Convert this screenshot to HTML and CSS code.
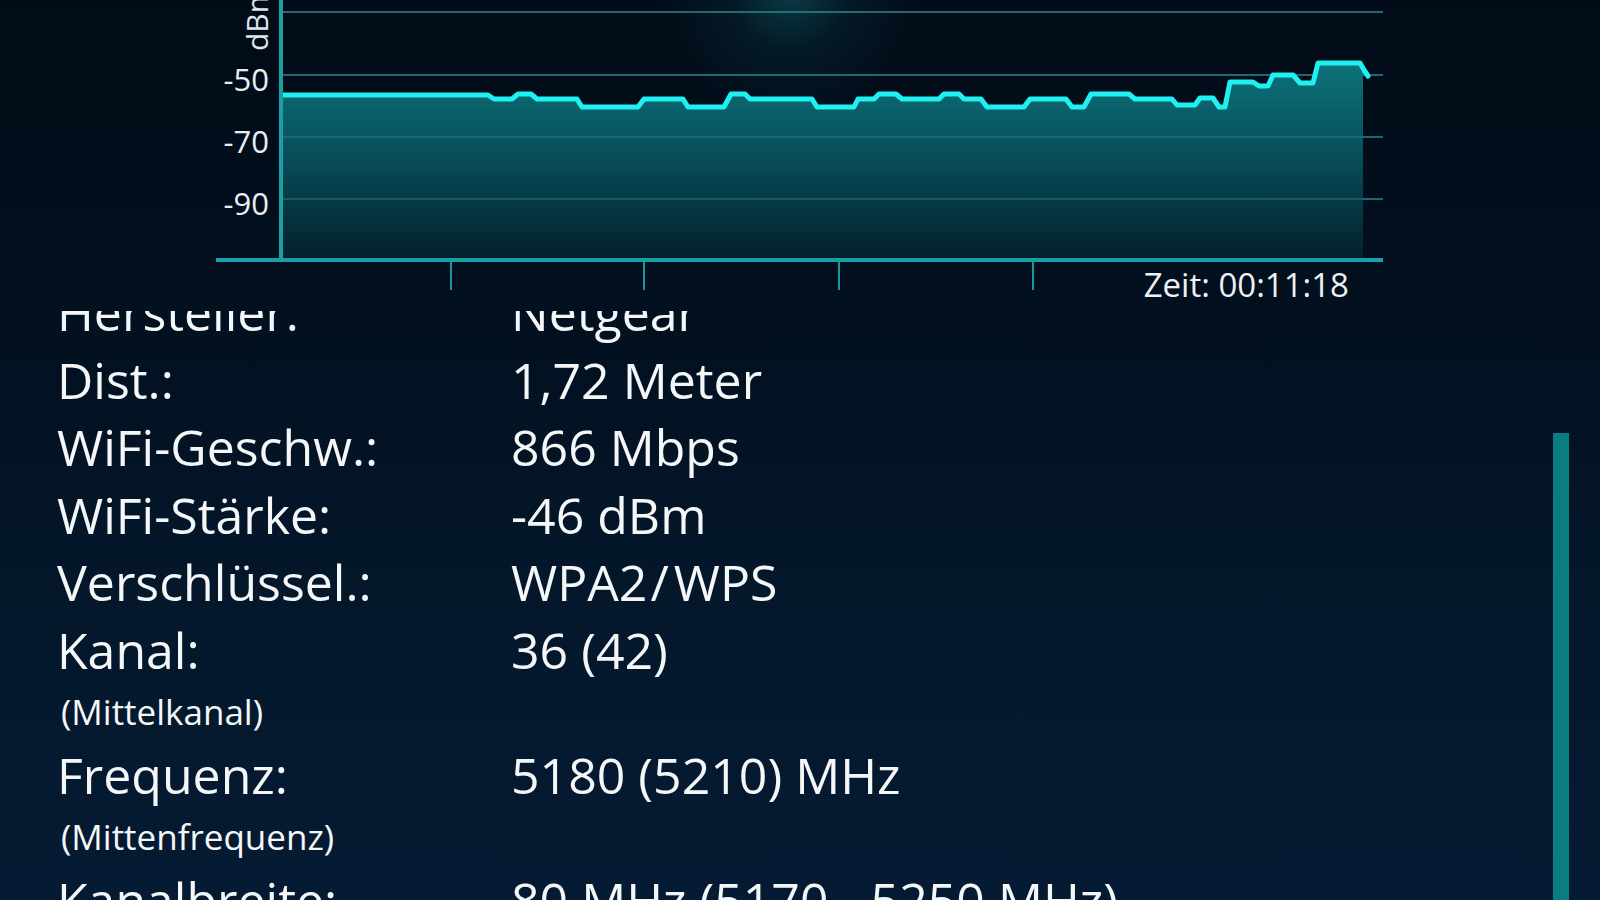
FILE: index.html
```html
<!DOCTYPE html>
<html lang="de">
<head>
<meta charset="utf-8">
<title>WiFi Details</title>
<link rel="stylesheet" href="styles.css">
</head>
<body>
<div class="screen">
  <section class="chart">
    <svg class="chart-svg" width="1600" height="311" viewBox="0 0 1600 311" xmlns="http://www.w3.org/2000/svg">
      <defs>
        <linearGradient id="fillGrad" x1="0" y1="60" x2="0" y2="258" gradientUnits="userSpaceOnUse">
          <stop offset="0" stop-color="#0b737a"/>
          <stop offset="0.45" stop-color="#08515c"/>
          <stop offset="1" stop-color="#04202d"/>
        </linearGradient>
      </defs>
      <g class="grid">
        <line x1="283" y1="12" x2="1383" y2="12"/>
        <line x1="283" y1="75" x2="1383" y2="75"/>
        <line x1="283" y1="137" x2="1383" y2="137"/>
        <line x1="283" y1="199" x2="1383" y2="199"/>
      </g>
      <polygon class="area" fill="url(#fillGrad)" points="283,95 488,95 494,99 512,99 518,94 531,94 537,99 577,99 582,107 638,107 644,99 683,99 688,107 724,107 731,94 745,94 750,99 812,99 817,107 854,107 858,99 874,99 879,94 896,94 902,99 939,99 944,94 959,94 964,99 981,99 987,107 1024,107 1030,99 1066,99 1072,107 1084,107 1091,94 1129,94 1135,99 1172,99 1177,105 1195,105 1200,98 1213,98 1219,107 1225,107 1230,82 1253,82 1259,86 1268,86 1273,75 1293,75 1300,83 1313,83 1318,63 1360,63 1363,68 1363,258 283,258"/>
      <g class="grid grid-over">
        <line x1="283" y1="137" x2="1363" y2="137"/>
        <line x1="283" y1="199" x2="1363" y2="199"/>
      </g>
      <polyline class="signal" points="283,95 488,95 494,99 512,99 518,94 531,94 537,99 577,99 582,107 638,107 644,99 683,99 688,107 724,107 731,94 745,94 750,99 812,99 817,107 854,107 858,99 874,99 879,94 896,94 902,99 939,99 944,94 959,94 964,99 981,99 987,107 1024,107 1030,99 1066,99 1072,107 1084,107 1091,94 1129,94 1135,99 1172,99 1177,105 1195,105 1200,98 1213,98 1219,107 1225,107 1230,82 1253,82 1259,86 1268,86 1273,75 1293,75 1300,83 1313,83 1318,63 1360,63 1364,70 1368,76"/>
      <g class="axis">
        <line x1="281" y1="0" x2="281" y2="262"/>
        <line x1="216" y1="260" x2="1383" y2="260"/>
      </g>
      <g class="ticks">
        <line x1="451" y1="262" x2="451" y2="290"/>
        <line x1="644" y1="262" x2="644" y2="290"/>
        <line x1="839" y1="262" x2="839" y2="290"/>
        <line x1="1033" y1="262" x2="1033" y2="290"/>
      </g>
      <g class="ylabels">
        <text x="269" y="91">-50</text>
        <text x="269" y="153">-70</text>
        <text x="269" y="215">-90</text>
      </g>
      <text class="unit" transform="translate(268 51) rotate(-90)">dBm</text>
      <text class="time" x="1349" y="297">Zeit: 00:11:18</text>
    </svg>
  </section>
  <section class="details">
    <div class="details-list">
      <div class="row"><div class="label">Hersteller:</div><div class="value">Netgear</div></div>
      <div class="row"><div class="label">Dist.:</div><div class="value">1,72 Meter</div></div>
      <div class="row"><div class="label">WiFi-Geschw.:</div><div class="value">866 Mbps</div></div>
      <div class="row"><div class="label">WiFi-Stärke:</div><div class="value">-46 dBm</div></div>
      <div class="row"><div class="label">Verschlüssel.:</div><div class="value">WPA2<span class="slash">/</span>WPS</div></div>
      <div class="row">
        <div class="label">Kanal:<div class="sublabel">(Mittelkanal)</div></div>
        <div class="value">36 (42)</div>
      </div>
      <div class="row">
        <div class="label">Frequenz:<div class="sublabel">(Mittenfrequenz)</div></div>
        <div class="value">5180 (5210) MHz</div>
      </div>
      <div class="row"><div class="label">Kanalbreite:</div><div class="value">80 MHz (5170 - 5250 MHz)</div></div>
    </div>
  </section>
  <div class="scrollbar"></div>
</div>
</body>
</html>
```

FILE: styles.css
```css
html, body {
  margin: 0;
  padding: 0;
  background: #020d1a;
}

.screen {
  position: relative;
  width: 1600px;
  height: 900px;
  overflow: hidden;
  font-family: "Open Sans", "Noto Sans", sans-serif;
  color: #f4f6f8;
  background:
    radial-gradient(circle at 790px -10px, rgba(18, 120, 128, 0.45) 0, rgba(18, 120, 128, 0.12) 60px, rgba(18, 120, 128, 0) 130px),
    linear-gradient(180deg, #020c18 0%, #020f1d 30%, #04172b 65%, #051b33 100%);
}

.chart {
  height: 311px;
}

.chart-svg {
  display: block;
}

.grid line {
  stroke: #2c8790;
  stroke-width: 1.6;
}

.grid-over line {
  stroke: #2a7f8a;
  stroke-opacity: 0.7;
}

.signal {
  fill: none;
  stroke: #1ff0f2;
  stroke-width: 5;
  stroke-linejoin: round;
  stroke-linecap: round;
}

.axis line {
  stroke: #1c9ea6;
  stroke-width: 4;
}

.ticks line {
  stroke: #1c97a0;
  stroke-width: 2;
}

.ylabels text {
  fill: #e9eef1;
  font-family: "Open Sans", sans-serif;
  font-size: 31px;
  text-anchor: end;
}

.unit {
  fill: #dfe6ea;
  font-family: "Open Sans", sans-serif;
  font-size: 30px;
}

.time {
  fill: #eef2f4;
  font-family: "Open Sans", sans-serif;
  font-size: 33px;
  text-anchor: end;
}

.details {
  height: 589px;
  overflow: hidden;
}

.details-list {
  margin-top: -32px;
  padding-left: 57px;
}

.row {
  display: grid;
  grid-template-columns: 454px 1fr;
  font-size: 50px;
  line-height: 67.6px;
}

.slash {
  padding: 0 5px 0 3px;
}

.sublabel {
  font-size: 35px;
  line-height: 54.4px;
  padding-left: 4px;
  padding-bottom: 3px;
}

.scrollbar {
  position: absolute;
  left: 1553px;
  top: 433px;
  width: 16px;
  height: 467px;
  background: #0a7d84;
}
```
